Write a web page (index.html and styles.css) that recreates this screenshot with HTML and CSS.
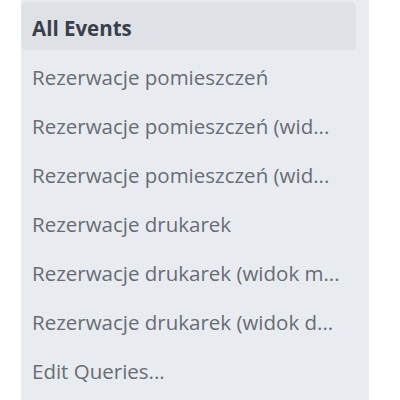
FILE: index.html
```html
<!DOCTYPE html>
<html>
<head>
<meta charset="utf-8">
<link rel="stylesheet" href="styles.css">
</head>
<body>
<nav class="panel">
  <div class="item active">All Events</div>
  <div class="item">Rezerwacje pomieszczeń</div>
  <div class="item">Rezerwacje pomieszczeń (wid...</div>
  <div class="item">Rezerwacje pomieszczeń (wid...</div>
  <div class="item">Rezerwacje drukarek</div>
  <div class="item">Rezerwacje drukarek (widok m...</div>
  <div class="item">Rezerwacje drukarek (widok d...</div>
  <div class="item">Edit Queries...</div>
</nav>
</body>
</html>
```
FILE: styles.css
```css
html, body {
  margin: 0;
  padding: 0;
  background: #ffffff;
}
.panel {
  margin-left: 21px;
  width: 348px;
  height: 400px;
  box-sizing: border-box;
  padding-top: 2px;
  background: #e8ebf0;
  display: flex;
  flex-direction: column;
  gap: 1px;
  font-family: "Open Sans", sans-serif;
  font-size: 20.5px;
}
.item {
  width: 335px;
  height: 48px;
  box-sizing: border-box;
  padding-left: 11px;
  padding-top: 4px;
  display: flex;
  align-items: center;
  color: #686c75;
  white-space: nowrap;
  border-radius: 5px;
}
.item.active {
  background: #dee1e6;
  color: #3a3f4b;
  font-weight: 700;
}
```
